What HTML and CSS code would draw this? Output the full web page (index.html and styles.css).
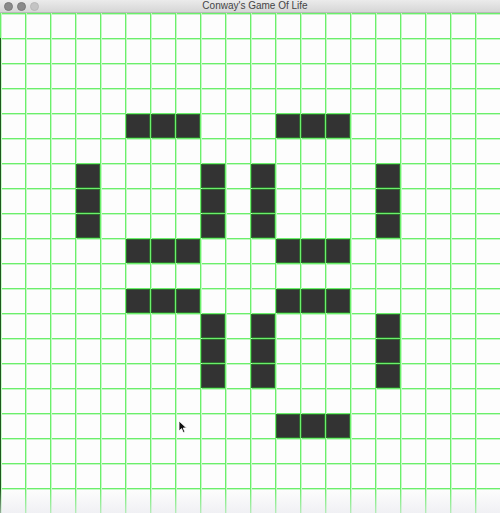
FILE: index.html
```html
<!DOCTYPE html>
<html>
<head>
<meta charset="utf-8">
<link rel="stylesheet" href="styles.css">
</head>
<body>
<div class="window">
  <div class="titlebar">
    <div class="lights">
      <span class="light"></span>
      <span class="light"></span>
      <span class="light dim"></span>
    </div>
    <div class="title">Conway's Game Of Life</div>
  </div>
  <div class="board">
    <div class="cell" style="grid-area:5/6"></div>
    <div class="cell" style="grid-area:5/7"></div>
    <div class="cell" style="grid-area:5/8"></div>
    <div class="cell" style="grid-area:5/12"></div>
    <div class="cell" style="grid-area:5/13"></div>
    <div class="cell" style="grid-area:5/14"></div>

    <div class="cell" style="grid-area:7/4"></div>
    <div class="cell" style="grid-area:8/4"></div>
    <div class="cell" style="grid-area:9/4"></div>
    <div class="cell" style="grid-area:7/9"></div>
    <div class="cell" style="grid-area:8/9"></div>
    <div class="cell" style="grid-area:9/9"></div>
    <div class="cell" style="grid-area:7/11"></div>
    <div class="cell" style="grid-area:8/11"></div>
    <div class="cell" style="grid-area:9/11"></div>
    <div class="cell" style="grid-area:7/16"></div>
    <div class="cell" style="grid-area:8/16"></div>
    <div class="cell" style="grid-area:9/16"></div>

    <div class="cell" style="grid-area:10/6"></div>
    <div class="cell" style="grid-area:10/7"></div>
    <div class="cell" style="grid-area:10/8"></div>
    <div class="cell" style="grid-area:10/12"></div>
    <div class="cell" style="grid-area:10/13"></div>
    <div class="cell" style="grid-area:10/14"></div>

    <div class="cell" style="grid-area:12/6"></div>
    <div class="cell" style="grid-area:12/7"></div>
    <div class="cell" style="grid-area:12/8"></div>
    <div class="cell" style="grid-area:12/12"></div>
    <div class="cell" style="grid-area:12/13"></div>
    <div class="cell" style="grid-area:12/14"></div>

    <div class="cell" style="grid-area:13/9"></div>
    <div class="cell" style="grid-area:14/9"></div>
    <div class="cell" style="grid-area:15/9"></div>
    <div class="cell" style="grid-area:13/11"></div>
    <div class="cell" style="grid-area:14/11"></div>
    <div class="cell" style="grid-area:15/11"></div>
    <div class="cell" style="grid-area:13/16"></div>
    <div class="cell" style="grid-area:14/16"></div>
    <div class="cell" style="grid-area:15/16"></div>

    <div class="cell" style="grid-area:17/12"></div>
    <div class="cell" style="grid-area:17/13"></div>
    <div class="cell" style="grid-area:17/14"></div>

    <div class="edge"></div>
    <div class="fade"></div>
    <svg class="cursor" width="10" height="14" viewBox="0 0 10 14">
      <path d="M1 1 L1 11 L3.5 8.6 L5.3 12.6 L6.9 11.9 L5.2 8 L8.5 8 Z" fill="#111" stroke="#fff" stroke-width="0.8"/>
    </svg>
  </div>
</div>
</body>
</html>
```
FILE: styles.css
```css
html, body {
  margin: 0;
  padding: 0;
  background: #fff;
}
.window {
  width: 500px;
  height: 513px;
  overflow: hidden;
}
.titlebar {
  height: 13px;
  position: relative;
  display: flex;
  align-items: center;
  justify-content: center;
  background: linear-gradient(to bottom, #ebebeb, #d6d6d6);
  border-bottom: 1px solid #b9b9b9;
  box-sizing: border-box;
}
.lights {
  position: absolute;
  left: 4px;
  top: 2px;
  display: flex;
  gap: 4px;
}
.light {
  width: 9px;
  height: 9px;
  border-radius: 50%;
  background: #8a8a8a;
  border: 0.5px solid #7a7a7a;
  box-sizing: border-box;
}
.light.dim {
  background: #c4c4c4;
  border-color: #b8b8b8;
}
.title {
  font-family: "Liberation Sans", Arial, sans-serif;
  font-size: 10px;
  color: #454545;
  line-height: 12px;
  padding-left: 10px;
}
.board {
  position: relative;
  width: 500px;
  height: 500px;
  display: grid;
  grid-template-columns: repeat(20, 25px);
  grid-template-rows: repeat(20, 25px);
  background-color: #fdfdfd;
  background-image:
    linear-gradient(to right, #6bef6b 0 1px, #c4f8c4 1px 2px, transparent 2px),
    linear-gradient(to bottom, #6bef6b 0 1px, #c4f8c4 1px 2px, transparent 2px);
  background-size: 25px 25px;
}
.cell {
  margin: 1px 0 0 1px;
  background: #333;
  border: 1px solid #2f6a2f;
  box-sizing: border-box;
}
.edge {
  position: absolute;
  left: 0;
  top: 25px;
  bottom: 0;
  width: 1px;
  background: #1e5a1e;
}
.fade {
  position: absolute;
  left: 0;
  right: 0;
  bottom: 0;
  height: 24px;
  background: linear-gradient(to bottom, rgba(235,235,240,0), rgba(232,232,238,0.6));
  pointer-events: none;
}
.cursor {
  position: absolute;
  left: 178px;
  top: 407px;
}
```
